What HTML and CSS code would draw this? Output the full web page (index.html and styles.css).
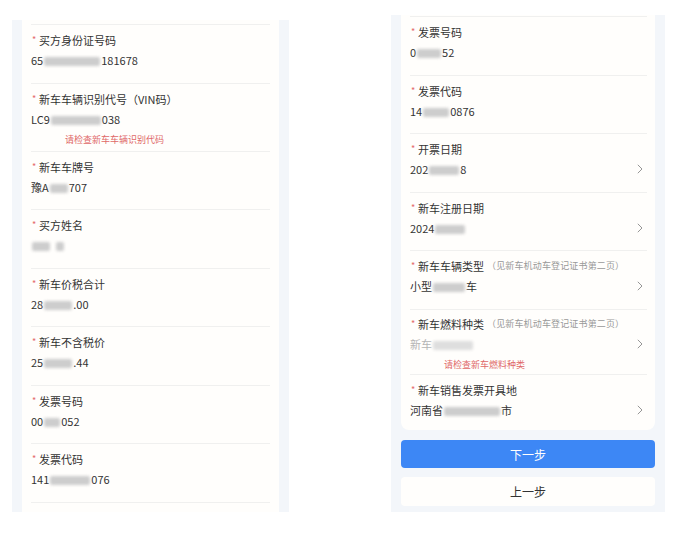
FILE: index.html
```html
<!DOCTYPE html>
<html lang="zh-CN">
<head>
<meta charset="utf-8">
<link rel="stylesheet" href="styles.css">
</head>
<body>
<div class="screens">
  <section class="panel panel-left">
    <div class="card">
      <div class="top-rule"></div>
      <div class="item">
        <div class="label"><span class="req">*</span>买方身份证号码</div>
        <div class="value">65<span class="mask" style="width:56px"></span>181678</div>
      </div>
      <div class="item has-error">
        <div class="label"><span class="req">*</span>新车车辆识别代号（VIN码）</div>
        <div class="value">LC9<span class="mask" style="width:50px"></span>038</div>
        <div class="error">请检查新车车辆识别代码</div>
      </div>
      <div class="item">
        <div class="label"><span class="req">*</span>新车车牌号</div>
        <div class="value">豫A<span class="mask" style="width:18px"></span>707</div>
      </div>
      <div class="item">
        <div class="label"><span class="req">*</span>买方姓名</div>
        <div class="value"><span class="mask" style="width:18px"></span><span class="mask gap" style="width:8px"></span></div>
      </div>
      <div class="item">
        <div class="label"><span class="req">*</span>新车价税合计</div>
        <div class="value">28<span class="mask" style="width:28px"></span>.00</div>
      </div>
      <div class="item">
        <div class="label"><span class="req">*</span>新车不含税价</div>
        <div class="value">25<span class="mask" style="width:28px"></span>.44</div>
      </div>
      <div class="item">
        <div class="label"><span class="req">*</span>发票号码</div>
        <div class="value">00<span class="mask" style="width:16px"></span>052</div>
      </div>
      <div class="item">
        <div class="label"><span class="req">*</span>发票代码</div>
        <div class="value">141<span class="mask" style="width:40px"></span>076</div>
      </div>
    </div>
  </section>

  <section class="panel panel-right">
    <div class="card card-right">
      <div class="top-rule thin"></div>
      <div class="item">
        <div class="label"><span class="req">*</span>发票号码</div>
        <div class="value">0<span class="mask" style="width:24px"></span>52</div>
      </div>
      <div class="item">
        <div class="label"><span class="req">*</span>发票代码</div>
        <div class="value">14<span class="mask" style="width:26px"></span>0876</div>
      </div>
      <div class="item">
        <div class="label"><span class="req">*</span>开票日期</div>
        <div class="value row"><span>202<span class="mask" style="width:30px"></span>8</span>
          <svg class="chev" viewBox="0 0 6 10"><polyline points="0.8,0.8 5,5 0.8,9.2"/></svg></div>
      </div>
      <div class="item">
        <div class="label"><span class="req">*</span>新车注册日期</div>
        <div class="value row"><span>2024<span class="mask" style="width:30px"></span></span>
          <svg class="chev" viewBox="0 0 6 10"><polyline points="0.8,0.8 5,5 0.8,9.2"/></svg></div>
      </div>
      <div class="item">
        <div class="label"><span class="req">*</span>新车车辆类型<span class="hint">（见新车机动车登记证书第二页）</span></div>
        <div class="value row"><span>小型<span class="mask" style="width:32px"></span>车</span>
          <svg class="chev" viewBox="0 0 6 10"><polyline points="0.8,0.8 5,5 0.8,9.2"/></svg></div>
      </div>
      <div class="item has-error tight">
        <div class="label"><span class="req">*</span>新车燃料种类<span class="hint">（见新车机动车登记证书第二页）</span></div>
        <div class="value row"><span class="faded">新车<span class="mask light" style="width:40px"></span></span>
          <svg class="chev" viewBox="0 0 6 10"><polyline points="0.8,0.8 5,5 0.8,9.2"/></svg></div>
        <div class="error">请检查新车燃料种类</div>
      </div>
      <div class="item last">
        <div class="label"><span class="req">*</span>新车销售发票开具地</div>
        <div class="value row"><span>河南省<span class="mask" style="width:56px"></span>市</span>
          <svg class="chev" viewBox="0 0 6 10"><polyline points="0.8,0.8 5,5 0.8,9.2"/></svg></div>
      </div>
    </div>
    <div class="actions">
      <button class="btn btn-primary">下一步</button>
      <button class="btn btn-plain">上一步</button>
    </div>
  </section>
</div>
</body>
</html>
```

FILE: styles.css
```css
* { box-sizing: border-box; }

html, body {
  margin: 0;
  padding: 0;
  background: #ffffff;
}

body {
  width: 680px;
  height: 534px;
  overflow: hidden;
  font-family: "Noto Sans CJK SC", "Noto Sans", "Liberation Sans", sans-serif;
  color: #333333;
}

.screens {
  display: flex;
  align-items: flex-start;
}

.panel {
  background: #f3f6fa;
  overflow: hidden;
  display: flex;
  flex-direction: column;
}

.panel-left {
  margin: 20px 0 0 12px;
  width: 277px;
  height: 492px;
  padding: 0 10px;
}

.panel-right {
  margin: 15px 0 0 102px;
  width: 274px;
  height: 497px;
  padding: 0 10px;
}

.card {
  background: #fffefc;
  padding: 0 9px;
  flex: 1;
}

.card-right {
  flex: none;
  height: 415px;
  padding: 0 8px 0 9px;
  border-radius: 0 0 8px 8px;
}

.top-rule {
  height: 5px;
  border-bottom: 1px solid #f0f0ef;
}

.top-rule.thin {
  height: 2px;
}

.item {
  padding: 7px 0 0;
  height: 58.5px;
  border-bottom: 1px solid #f0f0ef;
}

.item.has-error {
  height: 68px;
}

.item.tight {
  height: 65px;
  padding-top: 6px;
}

.item.last {
  border-bottom: none;
}

.label {
  font-size: 11px;
  line-height: 16px;
  height: 16px;
  color: #333333;
  white-space: nowrap;
  display: flex;
  align-items: center;
}

.req {
  color: #e46a6a;
  font-size: 9px;
  width: 7px;
  margin-left: 1px;
  display: inline-block;
  line-height: 16px;
}

.hint {
  font-size: 9px;
  color: #999999;
  margin-left: 3px;
  letter-spacing: 0.15px;
}

.value {
  margin-top: 2px;
  font-size: 11px;
  line-height: 20px;
  height: 20px;
  color: #333333;
  white-space: nowrap;
}

.value.row {
  display: flex;
  justify-content: space-between;
  align-items: center;
  padding-right: 4px;
}

.faded {
  color: #b5b5b5;
}

.mask {
  display: inline-block;
  height: 9px;
  vertical-align: -1px;
  background: #cdcdcd;
  border-radius: 2px;
  filter: blur(1.6px);
  margin: 0 1px;
}

.mask.gap {
  margin-left: 5px;
}

.mask.light {
  background: #dedede;
}

.chev {
  width: 6px;
  height: 10px;
  fill: none;
  stroke: #8a8a8a;
  stroke-width: 0.9;
}

.error {
  margin: 5px 0 0 34px;
  font-size: 9px;
  line-height: 12px;
  color: #e06868;
  white-space: nowrap;
}

.actions {
  display: flex;
  flex-direction: column;
  gap: 9px;
  margin-top: 10px;
}

.btn {
  border: none;
  font-family: inherit;
  font-size: 12px;
  border-radius: 4px;
  padding: 0;
  width: 100%;
}

.btn-primary {
  height: 28px;
  background: #3d87f5;
  color: #ffffff;
}

.btn-plain {
  height: 29px;
  background: #fffefc;
  color: #333333;
}
```
